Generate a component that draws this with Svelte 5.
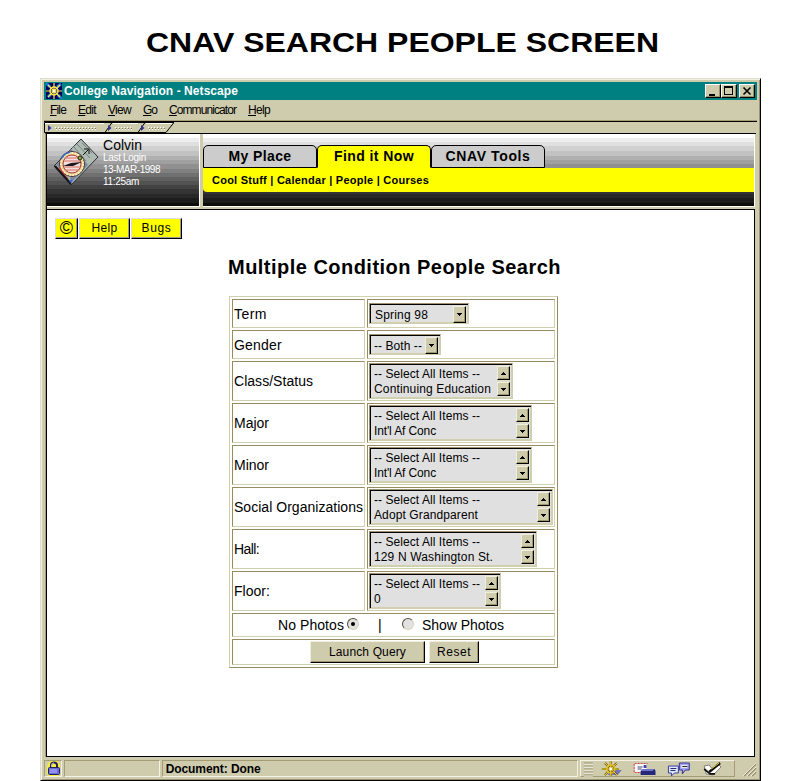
<script>
  const menus = [
    { t: 'File', w: 16, g: 12 }, { t: 'Edit', w: 18, g: 12 }, { t: 'View', w: 23, g: 12 },
    { t: 'Go', w: 14, g: 12 }, { t: 'Communicator', w: 67, g: 12 }, { t: 'Help', w: 22, g: 0 }
  ];
  const lists = [
    { label: 'Class/Status', lw: 79, w: 144, item: 'Continuing Education', iw: 117 },
    { label: 'Major', lw: 35, w: 163, item: "Int'l Af Conc", iw: 62 },
    { label: 'Minor', lw: 35, w: 163, item: "Int'l Af Conc", iw: 62 },
    { label: 'Social Organizations', lw: 129, w: 184, item: 'Adopt Grandparent', iw: 104 },
    { label: 'Hall:', lw: 25, w: 168, item: '129 N Washington St.', iw: 119 },
    { label: 'Floor:', lw: 36, w: 132, item: '0', iw: 7 }
  ];
  const grips = [{ w: 59, n: 14 }, { w: 33, n: 6 }, { w: 34, n: 6 }];

  // Tracks a line of text out to a given width.
  function fit(node, width) {
    const n = node.textContent.length;
    const natural = node.getBoundingClientRect().width;
    if (n > 1) node.style.letterSpacing = (width - natural) / n + 'px';
  }
  // Widens the glyphs themselves.
  function stretch(node, width) {
    node.style.transform = `scaleX(${width / node.getBoundingClientRect().width})`;
  }
</script>

{#snippet arrow(up)}
  <span class="arrow"><svg width="5" height="3" shape-rendering="crispEdges"><path d={up ? 'M2 0h1v1h1v1h1v1H0V2h1V1h1z' : 'M0 0h5v1H4v1H3v1H2V2H1V1H0z'} /></svg></span>
{/snippet}

<div class="page">
  <h1><span use:stretch={513}>CNAV SEARCH PEOPLE SCREEN</span></h1>

  <div class="window">
    <div class="titlebar">
      <svg class="wheel" width="16" height="16" viewBox="0 0 16 16">
        <rect width="16" height="16" fill="#000060" />
        <path d="M0 0l4 4M16 16l-4-4M11 4l4-3M2 14l3-3" stroke="#1878d8" stroke-width="3" />
        <path d="M8 0v16M0 8h16M2 2l12 12M14 2L2 14" stroke="#ffe84a" stroke-width="1.2" />
        <circle cx="8" cy="8" r="4" fill="none" stroke="#ffe84a" stroke-width="1.5" />
        <circle cx="8" cy="8" r="1.4" fill="#fff" />
      </svg>
      <span class="title"><span use:fit={174}>College Navigation - Netscape</span></span>
      <div class="winbtns">
        <span class="wb"><svg width="14" height="12" shape-rendering="crispEdges"><path d="M3 9h6v2H3z" /></svg></span>
        <span class="wb"><svg width="14" height="12" shape-rendering="crispEdges"><path d="M2 1h9v9H2zM3 3v6h7V3z" fill-rule="evenodd" /></svg></span>
        <span class="wb close"><svg width="14" height="12"><path d="M3.5 2.5l7 7M10.5 2.5l-7 7" stroke="#000" stroke-width="1.6" /></svg></span>
      </div>
    </div>

    <div class="menubar">
      {#each menus as m}
        <span class="menu" style="width:{m.w + m.g}px"><span use:fit={m.w}><u>{m.t[0]}</u>{m.t.slice(1)}</span></span>
      {/each}
    </div>

    <div class="strip">
      <svg width="130" height="11">
        <path d="M0.5 .5H130L122 10.5H.5zM61 10.5l7-10M94 10.5l7-10" fill="none" stroke="#000" />
        <path d="M1 1.5h59M69 1.5h25M102 1.5h26" stroke="#fff" />
        {#each [4, 64, 97] as x, i}
          <path d="M{x} 3v6l3.500-3z" fill="#32328c" />
          <path d="M{x + 7} 5.500h{i ? 17 : 40}M{x + 8} 7.500h{i ? 17 : 40}" stroke="#fff" stroke-dasharray="1 2" />
          <path d="M{x + 8} 6.500h{i ? 17 : 40}" stroke="#77775c" stroke-dasharray="1 2" />
        {/each}
      </svg>
    </div>

    <div class="client">
      <div class="frames">
        <div class="user">
          <svg class="compass" width="46" height="48" viewBox="0 0 46 48">
            <path d="M28 1L45 19 18 47 1 28z" fill="#a9b5ae" stroke="#30343c" />
            <path d="M28 3L43 19 36 26 19 10z" fill="#aebbb2" />
            <path d="M3 27l15-16 4 5-14 15zM18 45l17-18-4-5-14 17z" fill="#7c8ba5" />
            <path d="M24 6l13 14M29 5l10 10M21 9l12 14" stroke="#586c6c" stroke-width=".7" />
            <path d="M30 17l5-5M31 11h5v5" stroke="#111" fill="none" />
            <circle cx="19" cy="26" r="12.500" fill="#e6c68c" stroke="#403038" />
            <circle cx="19" cy="26" r="11" fill="none" stroke="#fff0bc" stroke-width="2" stroke-dasharray="2 1" />
            <circle cx="19" cy="26" r="9" fill="#f4ddd8" stroke="#a54438" />
            <path d="M13 20h12M11 23h16M11 29h16M13 32h12" stroke="#d66c68" />
            <path d="M10 28l8-3 11-1-9 4z" fill="#181820" />
            <path d="M6 29l6 9M9 35l6 6" stroke="#d8493a" stroke-width="1.500" />
            <path d="M8 21l4-5 5-2" stroke="#3468c8" fill="none" stroke-width="1.500" />
            <path d="M2 28l16 18" stroke="#15151a" stroke-width="2" />
            <circle cx="27" cy="20" r="2" fill="#88a838" stroke="#222" /><circle cx="18" cy="43" r="1.500" fill="#386cd8" />
          </svg>
          <div class="who">
            <div class="name"><span use:fit={39}>Colvin</span></div>
            <div><span use:fit={43}>Last Login</span></div>
            <div><span use:fit={57}>13-MAR-1998</span></div>
            <div><span use:fit={36}>11:25am</span></div>
          </div>
        </div>
        <div class="nav">
          <div class="tabs">
            <div class="tab"><span use:fit={63}>My Place</span></div>
            <div class="tab on"><span use:fit={80}>Find it Now</span></div>
            <div class="tab"><span use:fit={85}>CNAV Tools</span></div>
          </div>
          <div class="sub"><span use:fit={217}>Cool Stuff | Calendar | People | Courses</span></div>
        </div>
      </div>

      <div class="doc">
        <div class="tools">
          <span class="yb c"><span>©</span></span>
          <span class="yb"><span use:fit={26}>Help</span></span>
          <span class="yb"><span use:fit={30}>Bugs</span></span>
        </div>
        <h2><span use:fit={333}>Multiple Condition People Search</span></h2>

        <div class="form">
          <div class="cell"><span use:fit={33}>Term</span></div>
          <div class="cell f"><div class="combo" style="width:100px"><span use:fit={53}>Spring 98</span><i class="drop">{@render arrow(false)}</i></div></div>
          <div class="cell"><span use:fit={48}>Gender</span></div>
          <div class="cell f"><div class="combo" style="width:72px"><span use:fit={48}>-- Both --</span><i class="drop">{@render arrow(false)}</i></div></div>
          {#each lists as l}
            <div class="cell"><span use:fit={l.lw}>{l.label}</span></div>
            <div class="cell f">
              <div class="list" style="width:{l.w}px">
                <div class="opts">
                  <div><span use:fit={106}>-- Select All Items --</span></div>
                  <div><span use:fit={l.iw}>{l.item}</span></div>
                </div>
                <div class="scroll">{@render arrow(true)}{@render arrow(false)}</div>
              </div>
            </div>
          {/each}
          <div class="cell wide photos">
            <span class="np"><span use:fit={66}>No Photos</span></span>
            <span class="radio dot"></span>
            <span class="bar">|</span>
            <span class="radio"></span>
            <span class="sp"><span use:fit={82}>Show Photos</span></span>
          </div>
          <div class="cell wide btns">
            <span class="btn launch"><span use:fit={77}>Launch Query</span></span>
            <span class="btn reset"><span use:fit={34}>Reset</span></span>
          </div>
        </div>
      </div>
    </div>

    <div class="status">
      <div class="pane lock">
        <svg width="14" height="15" viewBox="0 0 14 15">
          <path d="M1 2l3-2h6l3 3v10l-2 2H2l-2-2V6z" fill="#f5ee3c" />
          <path d="M4 7V4q0-2.500 3-2.500T10 4v3" fill="none" stroke="#22225a" stroke-width="2" />
          <path d="M4.500 7V4q0-2 2.500-2" fill="none" stroke="#d8d8ff" stroke-width=".8" />
          <rect x="1.500" y="6.500" width="11" height="7" rx="1" fill="#6a6ae0" stroke="#22225a" />
          <path d="M3 9h7M3 11h7" stroke="#b8b8ff" />
        </svg>
      </div>
      <div class="pane prog"></div>
      <div class="pane msg"><span use:fit={95}>Document: Done</span></div>
      <div class="pane comp">
        <svg width="154" height="16" viewBox="0 0 154 16">
          <path d="M3 3h9M3 6h9M3 9h9M3 12h9M3 15h9" stroke="#fff" /><path d="M3 2h9M3 5h9M3 8h9M3 11h9M3 14h9" stroke="#9b946d" />
          <path d="M30 9h11l-4 5H27z" fill="#7272bb" />
          <g fill="none"><path d="M30 0v15M21 8h17M24 2l12 12M36 2L24 14" stroke="#675400" stroke-width="2" />
          <path d="M30 0v15M21 8h17M24 2l12 12M36 2L24 14" stroke="#ffe64a" /><circle cx="30" cy="8" r="4" stroke="#e2be24" stroke-width="1.500" /></g>
          <circle cx="30" cy="8" r="1.500" fill="#fff" />
          <path d="M54 3h12v8H54z" fill="#fff" /><path d="M54 2.500h13M54 11.500h9M53.500 3v9" stroke="#c84452" stroke-dasharray="2 1" />
          <path d="M57 6h5M57 8h4" stroke="#447" /><path d="M63 4h3v3h-3z" fill="#4646b0" />
          <path d="M62 8h12l1 2v4H60v-4z" fill="#282878" /><path d="M62 8h12l-2 2H60z" fill="#7474d0" />
          <path d="M88 5h10v7h-4l-3 3v-3h-3z" fill="#dce8ff" stroke="#3c3ca0" /><path d="M90 7.500h6M90 9.500h5" stroke="#2a2a70" />
          <path d="M99 2h10v7h-4l-3 4V9h-3z" fill="#a5a5f5" stroke="#34348c" /><path d="M101 4h6v3h-6z" fill="#eee" /><path d="M102 5.500h5" stroke="#222" />
          <path d="M124 5l5-1 3 4 7-4 2 2-8 8-7-1z" fill="#fff" stroke="#555" stroke-width=".7" />
          <path d="M124 8l6 5h5" stroke="#111" stroke-width="1.800" fill="none" /><path d="M129 11L140 2" stroke="#111" stroke-width="2.500" /><path d="M131 8l8-6" stroke="#e8d83c" />
        </svg>
      </div>
      <svg class="size" width="14" height="14"><path d="M1 13L13 1M5 13l8-8M9 13l4-4" stroke="#948c68" stroke-width="1.400" /><path d="M0 13L13 0M4 13l9-9M8 13l5-5" stroke="#fff" stroke-width=".7" /></svg>
    </div>
  </div>
</div>

<style>
  :global(body) { background: #fff; overflow: hidden; }
  * { box-sizing: border-box; }
  .page { width: 801px; height: 781px; padding-left: 40px; font-family: "Liberation Sans", Arial, sans-serif; color: #000; font-size: 12px; white-space: nowrap; overflow: hidden; }
  .page span { flex: none; }
  h1 { margin: 0; height: 78px; padding: 27px 0 0 106px; font-size: 28px; line-height: 31px; }
  h1 span { display: inline-block; transform-origin: 0 0; }
  .window { width: 721px; height: 703px; background: #cfccae; border: 1px solid #dedccb; border-right-color: #000; border-bottom-color: #000; padding: 3px 3px 0; box-shadow: inset 1px 1px #f2f0e2, inset -1px -1px #9c9573; }
  .titlebar { height: 18px; background: #008080; color: #fff; display: flex; align-items: center; padding: 0 2px; font-weight: bold; width: 713px; }
  .title { margin-left: 2px; line-height: 18px; }
  .winbtns { margin-left: auto; display: flex; }
  .wb { width: 16px; height: 14px; background: #cfccae; border: 1px solid; border-color: #fff #000 #000 #fff; box-shadow: inset -1px -1px #99906b; display: flex; }
  .close { margin-left: 2px; }
  .menubar { height: 22px; border-bottom: 1px solid #000; box-shadow: inset 0 -1px #a69d76; display: flex; padding-left: 6px; line-height: 20px; }
  .menu { display: block; }
  .strip { height: 11px; display: flex; }
  .client { height: 624px; border-top: 1px solid #000; border-left: 1px solid #a49c74; margin-left: 1px; width: 711px; background: #cfccae; }
  .frames { height: 75px; display: flex; border-left: 1px solid #000; gap: 3px; }
  .user, .nav {
    height: 73px; border-right: 1px solid #fff; border-bottom: 1px solid #fff;
    background: linear-gradient(#fff 0 4px, #eee 4px 8px, #e0e0e0 8px 12px, #d0d0d0 12px 17px, #c2c2c2 17px 22px, #b0b0b0 22px 26px, #a0a0a0 26px 30px, #909090 30px 35px, #808080 35px 39px, #707070 39px 43px, #606060 43px 47px, #525252 47px 51px, #424242 51px 55px, #343434 55px 60px, #282828 60px 64px, #1c1c1c 64px 69px, #0c0c0c 69px);
  }
  .user { width: 153px; display: flex; padding: 4px 0 0 6px; }
  .who { margin-left: 4px; color: #fff; font-size: 10px; line-height: 12px; padding-top: 1px; }
  .who .name { font-size: 14px; line-height: 12px; color: #000; }
  .who div:nth-child(2) { margin-top: 1px; }
  .nav { width: 552px; padding-top: 11px; }
  .tabs { height: 23px; display: flex; }
  .tab { width: 114px; background: #ccc; border: 1px solid #000; border-radius: 5px 5px 0 0; display: flex; justify-content: center; font-weight: bold; font-size: 14px; line-height: 21px; }
  .on { background: #ff0; border-bottom-color: #ff0; }
  .sub { height: 24px; background: #ff0; border-bottom-left-radius: 4px; padding-left: 9px; font-weight: bold; font-size: 11px; line-height: 24px; }
  .doc { height: 548px; width: 709px; border: 1px solid #000; border-right-color: #000; background: #fff; display: flex; flex-direction: column; padding-top: 8px; }
  .tools { display: flex; height: 21px; gap: 1px; padding-left: 8px; }
  .yb { width: 51px; height: 21px; background: #ff0; border: 1px solid; border-color: #ddd #000 #000 #ddd; box-shadow: inset -1px -1px #999; display: flex; justify-content: center; line-height: 18px; }
  .c { width: 23px; font-size: 18px; line-height: 18px; }
  h2 { margin: 15px 0 0 181px; height: 42px; line-height: 26px; font-size: 20px; }
  .form { margin-left: 182px; width: 329px; height: 372px; display: grid; grid-template-columns: 133px 188px; grid-template-rows: 29px 29px repeat(6, 40px) 24px 26px; gap: 2px; padding: 2px; border: 1px solid; border-color: #d0d0ae #998b60 #998b60 #d0d0ae; }
  .cell { border: 1px solid; border-color: #998b60 #d0d0ae #d0d0ae #998b60; display: flex; align-items: center; padding-left: 1px; font-size: 14px; }
  .wide { grid-column: span 2; }
  .combo, .list { border: 1px solid; border-color: #9d9270 #d0d0ae #d0d0ae #9d9270; background: #e0e0e0; display: flex; font-size: 12px; box-shadow: inset 1px 1px #000, inset -1px -1px #d0d0ae; }
  .combo { height: 21px; padding: 2px 2px 2px 5px; justify-content: space-between; line-height: 18px; }
  .drop { display: flex; }
  .drop .arrow { height: 17px; }
  .combo[style*="72"] { padding-left: 4px; }
  .list { height: 36px; padding: 2px; justify-content: space-between; }
  .opts { line-height: 15px; padding: 1px 0 0 2px; }
  .scroll { display: flex; flex-direction: column; justify-content: space-between; width: 13px; padding: 0 0 0; background: #dddcc8; }
  .arrow { width: 13px; height: 14px; background: #cfccae; border: 1px solid; border-color: #f0eedd #000 #000 #f0eedd; box-shadow: inset -1px -1px #a0976c; display: flex; align-items: center; justify-content: center; }
  .photos { padding-left: 45px; }
  .np { width: 69px; }
  .radio { width: 12px; height: 12px; border-radius: 50%; background: #e2e2e2; border: 1.500px solid; border-color: #55503b #d8d5bb #d8d5bb #55503b; margin-top: -3px; display: flex; }
  .dot::after { content: ""; width: 4px; height: 4px; border-radius: 50%; background: #000; margin: auto; }
  .bar { width: 43px; padding-left: 19px; }
  .sp { margin-left: 8px; }
  .btns { padding-left: 77px; gap: 4px; font-size: 12px; }
  .btn { height: 22px; background: #cfccae; border: 1px solid; border-color: #f0eedd #000 #000 #f0eedd; box-shadow: inset -1px -1px #a0976c; display: flex; justify-content: center; line-height: 20px; }
  .launch { width: 115px; }
  .reset { width: 50px; }
  .status { height: 23px; display: flex; align-items: flex-start; padding-top: 3px; gap: 2px; }
  .pane { height: 17px; border: 1px solid; border-color: #a49c74 #f4f2e6 #f4f2e6 #a49c74; display: flex; line-height: 16px; }
  .lock { width: 18px; padding-left: 2px; }
  .prog { width: 96px; }
  .msg { width: 418px; font-weight: bold; padding-left: 3px; }
  .comp { width: 155px; border-color: #f4f2e6 #a49c74 #a49c74 #f4f2e6; }
  .size { margin: 3px 0 0 6px; }
</style>
